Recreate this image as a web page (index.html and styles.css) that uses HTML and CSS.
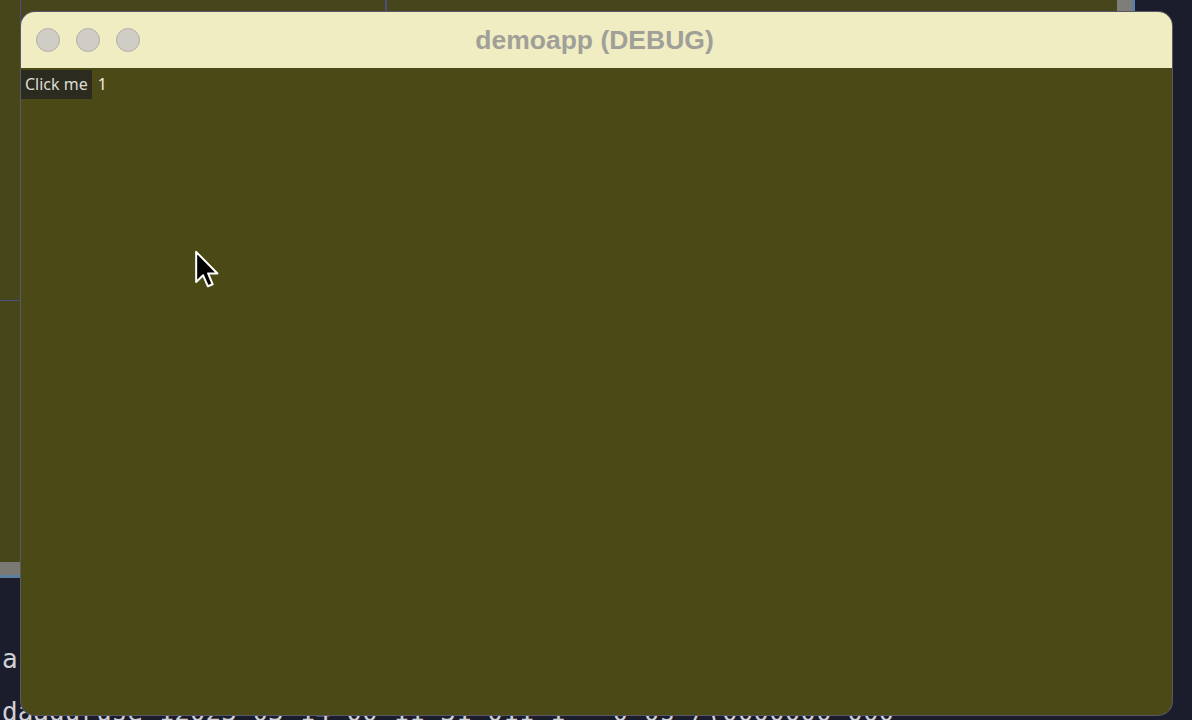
FILE: index.html
```html
<!DOCTYPE html>
<html>
<head>
<meta charset="utf-8">
<link rel="stylesheet" href="styles.css">
</head>
<body>
<div class="desktop">
  <div class="bg-left"></div>
  <div class="bg-vline"></div>
  <div class="bg-hline"></div>
  <div class="bg-topline"></div>
  <div class="bg-topgrey"></div>
  <div class="bg-topblue"></div>
  <div class="terminal">
    <div class="term-bar"></div>
    <div class="term-body">
      <div class="term-line term-a">a</div>
      <div class="term-line term-last">daaguruse 12023-03-14 00 11 31 011 1 - 0 0s /(0000000 000</div>
    </div>
  </div>
  <div class="bg-right"></div>

  <div class="window">
    <div class="titlebar">
      <div class="lights">
        <span class="light"></span>
        <span class="light"></span>
        <span class="light"></span>
      </div>
      <div class="title">demoapp (DEBUG)</div>
    </div>
    <div class="content">
      <div class="row">
        <button class="btn">Click me</button>
        <span class="count">1</span>
      </div>
    </div>
  </div>

  <svg class="cursor" width="30" height="44" viewBox="0 0 16 24">
    <path d="M1 1 L1 17.5 L4.8 13.8 L7.4 19.8 L10 18.7 L7.5 12.8 L12.6 12.8 Z" fill="#000" stroke="#fff" stroke-width="1.1" stroke-linejoin="round"/>
  </svg>
</div>
</body>
</html>
```

FILE: styles.css
```css
html, body {
  margin: 0;
  padding: 0;
}
body {
  width: 1192px;
  height: 720px;
  overflow: hidden;
  background: #45441c;
  font-family: "Noto Sans", "Open Sans", sans-serif;
}
.desktop {
  position: relative;
  width: 1192px;
  height: 720px;
  overflow: hidden;
  background: #46451b;
}
.bg-left {
  position: absolute;
  left: 0;
  top: 0;
  width: 20px;
  height: 562px;
  background: #47461b;
}
.bg-vline {
  position: absolute;
  left: 20px;
  top: 0;
  width: 1px;
  height: 562px;
  background: #4d4c86;
}
.bg-hline {
  position: absolute;
  left: 0;
  top: 300px;
  width: 20px;
  height: 1px;
  background: #4d4c86;
}
.bg-topline {
  position: absolute;
  left: 385px;
  top: 0;
  width: 2px;
  height: 14px;
  background: #4d4c86;
}
.bg-topgrey {
  position: absolute;
  left: 1117px;
  top: 0;
  width: 15px;
  height: 14px;
  background: #7e7d7a;
}
.bg-topblue {
  position: absolute;
  left: 1132px;
  top: 0;
  width: 3px;
  height: 14px;
  background: #5d7fa3;
}
.bg-right {
  position: absolute;
  left: 1135px;
  top: 0;
  width: 57px;
  height: 720px;
  background: #1b1d2c;
}
.terminal {
  position: absolute;
  left: 0;
  top: 562px;
  width: 1135px;
  height: 158px;
  display: flex;
  flex-direction: column;
  background: #1b1d2c;
  overflow: hidden;
}
.term-bar {
  flex: none;
  height: 13px;
  background: #7a7974;
  border-bottom: 3px solid #5a7fa0;
}
.term-body {
  flex: none;
  padding-left: 2px;
  color: #cfd0d6;
  font-family: "DejaVu Sans Mono", "Liberation Mono", monospace;
  font-size: 26px;
  line-height: 30px;
}
.term-a {
  margin-top: 66px;
}
.term-last {
  margin-top: 23px;
  white-space: nowrap;
}
.window {
  position: absolute;
  left: 21px;
  top: 12px;
  width: 1151px;
  height: 703px;
  border-radius: 14px;
  overflow: hidden;
  background: #4b4916;
  box-shadow: 0 0 0 1px #5a5866;
  display: flex;
  flex-direction: column;
}
.titlebar {
  height: 56px;
  flex: none;
  background: #f0edc2;
  display: flex;
  align-items: center;
  position: relative;
}
.lights {
  display: flex;
  gap: 16px;
  padding-left: 15px;
}
.light {
  width: 22px;
  height: 22px;
  border-radius: 50%;
  background: #cfcdc6;
  border: 1px solid #b2b0a8;
}
.title {
  position: absolute;
  left: 0;
  right: 0;
  top: 0;
  bottom: 0;
  display: flex;
  align-items: center;
  justify-content: center;
  font-family: "Liberation Sans", Arial, sans-serif;
  font-weight: bold;
  font-size: 26.5px;
  color: #a09f98;
  padding-top: 1px;
  padding-right: 4px;
}
.content {
  flex: 1;
  padding-top: 2px;
}
.row {
  display: flex;
  align-items: center;
  gap: 6px;
}
.btn {
  background: #2c2b1f;
  color: #dedcd2;
  border: none;
  margin: 0;
  padding: 0 4px 0 4px;
  height: 29px;
  font-family: "Noto Sans", "Open Sans", sans-serif;
  font-size: 16px;
  line-height: 29px;
}
.count {
  color: #eeece2;
  font-size: 16px;
  line-height: 29px;
}
.cursor {
  position: absolute;
  left: 194px;
  top: 250px;
}
```
